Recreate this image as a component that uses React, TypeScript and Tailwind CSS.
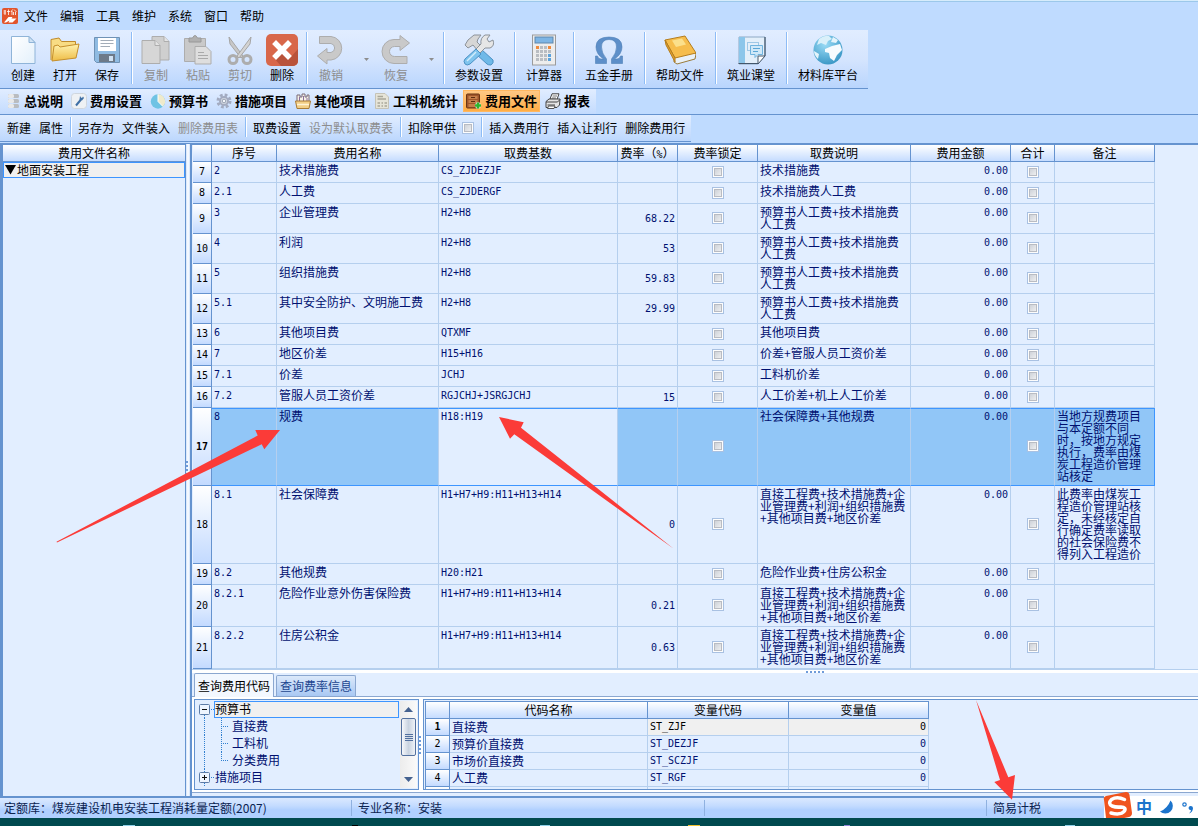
import React from "react";

type IconProps = { className?: string };

/* ---------- toolbar icons ---------- */

const NewIcon = () => (
  <svg viewBox="0 0 32 32" className="size-8">
    <defs>
      <linearGradient id="newG" x1="0" y1="0" x2="1" y2="1">
        <stop offset="0" stopColor="#fff" />
        <stop offset="1" stopColor="#e3f0fb" />
      </linearGradient>
    </defs>
    <path d="M4.500 2.500H22L28 8.500V29.500H4.500Z" fill="url(#newG)" stroke="#8fb4d8" />
    <path d="M22 2.500V8.500H28Z" fill="#cfe2f4" stroke="#8fb4d8" />
  </svg>
);

const OpenIcon = () => (
  <svg viewBox="0 0 32 32" className="size-8">
    <defs>
      <linearGradient id="openG" x1="0" y1="0" x2="0" y2="1">
        <stop offset="0" stopColor="#fff3b0" />
        <stop offset="1" stopColor="#eebc45" />
      </linearGradient>
    </defs>
    <path d="M2 26V5.500L10 4L12.500 7.500H26.500V13" fill="#f8dc84" stroke="#c08a2a" />
    <path d="M5 12L9 11L11 13L30 10L27 24L3 27Z" fill="url(#openG)" stroke="#c58f2c" />
  </svg>
);

const SaveIcon = () => (
  <svg viewBox="0 0 32 32" className="size-8">
    <path d="M3.500 3.500H28.500V28.500H5.500L3.500 26.500Z" fill="#8fbbe2" stroke="#6f92b5" />
    <rect x="7" y="4" width="18" height="13" fill="#fff" />
    <path d="M9.500 6.500H22.500M9.500 9.500H22.500M9.500 12.500H19" stroke="#a3adb8" />
    <rect x="8" y="20" width="16" height="8" fill="#6d7a89" />
    <rect x="18" y="22" width="4" height="5" fill="#cfe2f4" />
  </svg>
);

const CopyIcon = () => (
  <svg viewBox="0 0 32 32" className="size-8">
    <path d="M12 2.500H24L29 7.500V26H12Z" fill="#cfcfcf" stroke="#adadad" />
    <path d="M24 2.500V7.500H29" fill="#e4e4e4" stroke="#adadad" />
    <path d="M2 6.500H15L20 11.500V29.500H2Z" fill="#d6d6d6" stroke="#adadad" />
    <path d="M15 6.500V11.500H20" fill="#e4e4e4" stroke="#adadad" />
  </svg>
);

const PasteIcon = () => (
  <svg viewBox="0 0 32 32" className="size-8">
    <path d="M2.500 4.500H23.500V27.500H2.500Z" fill="#c9c9c9" stroke="#adadad" />
    <path d="M7 8V4H10.500Q13 -1 15.500 4H19V8Z" fill="#b0b0b0" stroke="#989898" />
    <path d="M13 12.500H24L29 17.500V30H13Z" fill="#dedede" stroke="#adadad" />
    <path d="M16 18.500H22M16 21.500H26M16 24.500H26" stroke="#a9a9a9" />
  </svg>
);

const CutIcon = () => (
  <svg viewBox="0 0 32 32" className="size-8" fill="none">
    <path d="M5 3L19 22L17 24L6 10Z" fill="#c8c8c8" stroke="#a6a6a6" />
    <path d="M27 3L13 22L15 24L26 10Z" fill="#d4d4d4" stroke="#a6a6a6" />
    <circle cx="9" cy="25.500" r="4" stroke="#adadad" strokeWidth="3" />
    <circle cx="23" cy="25.500" r="4" stroke="#adadad" strokeWidth="3" />
  </svg>
);

const DeleteIcon = () => (
  <svg viewBox="0 0 32 32" className="size-8">
    <rect width="32" height="32" rx="5" fill="#d8674a" />
    <path d="M8 24L14 18L24 24L32 15V27A5 5 0 0 1 27 32H15Z" fill="#b9523a" />
    <path d="M10 10L22 22M22 10L10 22" stroke="#fff" strokeWidth="5.500" strokeLinecap="square" />
  </svg>
);

const UndoIcon = () => (
  <svg viewBox="0 0 32 32" className="size-8">
    <path
      d="M4.500 2.500H16A11.800 11.800 0 0 1 16 26H12V30L2.500 22L12 14.500V18.500H16A4.600 4.600 0 0 0 16 9.500H4.500Z"
      fill="#c9c9c9"
      stroke="#adadad"
    />
  </svg>
);

const RedoIcon = () => (
  <svg viewBox="0 0 32 32" className="size-8">
    <path
      d="M27 29.500H14A11.800 11.800 0 0 1 14 5.500H20V1.500L29.500 9L20 16.500V12.500H14.500A5 5 0 0 0 14.500 22.500H27Z"
      fill="#c9c9c9"
      stroke="#adadad"
    />
  </svg>
);

const ToolsIcon = () => (
  <svg viewBox="0 0 32 32" className="size-8">
    <path d="M18 15L30 26Q31 29 28 31Q25 31 24 30L13 20Z" fill="#6fb9e8" stroke="#4b91c4" />
    <path d="M5 14L2 11L5 6L11 1H18L15 5L14 8L19 13L15 17L10 11Z" fill="#d6d6d6" stroke="#8c9299" />
    <path d="M22 1L27 1L24 5L26 8L30 6Q32 12 27 14L22 14L16 20L12 16L18 10Q17 4 22 1Z" fill="#e6e6e6" stroke="#8c9299" />
    <path d="M13 15L18 20L7 30Q4 32 2 30Q0 27 2 25Z" fill="#7fc4ee" stroke="#4b91c4" />
    <path d="M4 27L13 18" stroke="#d3edfb" strokeWidth="1.500" />
  </svg>
);

const CalcIcon = () => (
  <svg viewBox="0 0 32 32" className="size-8">
    <rect x="4.500" y="1" width="23" height="30" fill="#ededed" stroke="#9b9b9b" />
    <rect x="7" y="3" width="18" height="6" fill="#7db5e5" stroke="#5f87ad" />
    {[12, 16, 20, 24].map((y) =>
      [8, 12, 16, 20].map((x) => (
        <rect
          key={x + "-" + y}
          x={x}
          y={y}
          width="3"
          height="3"
          fill={x === 20 && y > 18 ? "#5aa2dc" : y === 12 && (x === 8 || x === 20) ? "#f08a3c" : "#b9bdc2"}
        />
      ))
    )}
  </svg>
);

const OmegaIcon = () => (
  <svg viewBox="0 0 32 32" className="size-8">
    <path
      d="M2.500 22H4.500Q5 25 8 25H10.500Q3 20 3 13Q3 3 16 3T29 13Q29 20 21.500 25H24Q27 25 27.500 22H29.500V29.500H18.500V25Q23.500 19 23.500 13Q23.500 5.500 16 5.500T8.500 13Q8.500 19 13.500 25V29.500H2.500Z"
      fill="#5d8fc9"
      stroke="#4f7fb6"
      strokeWidth=".6"
    />
  </svg>
);

const BookIcon = () => (
  <svg viewBox="0 0 32 32" className="size-8">
    <path d="M10 23L30 18L32 20L31 25L13 30L10 28Z" fill="#e9f1f8" stroke="#9a7b3a" />
    <path d="M1 6L21 2L32 19L11 24Z" fill="#f6bd4c" stroke="#b47d1e" />
    <path d="M1 6L11 24V28L2 11Z" fill="#e09f2e" stroke="#b47d1e" />
    <path d="M8 6.500L18 4.500L22 10.500L12 13Z" fill="#fbe08c" />
  </svg>
);

const ClassIcon = () => (
  <svg viewBox="0 0 32 32" className="size-8">
    <path d="M4 3H30V22L23 30H4Z" fill="#e3effa" stroke="#8ea9c4" />
    <path d="M4 3H10V30H4Z" fill="#8cc6ea" />
    <path d="M3.500 29.500H23M30 3V22" stroke="#44566a" strokeWidth="1.200" />
    <rect x="12.500" y="8.500" width="11" height="8" fill="none" stroke="#9fc8e6" />
    <path d="M15.500 11.500H27.500V20.500H23L20 23.500V20.500H15.500Z" fill="#cfe8f8" stroke="#6fb3de" />
    <path d="M18 14.500H25M18 17.500H23" stroke="#5ba6d6" />
    <path d="M30 22L23 30V22Z" fill="#fff" stroke="#44566a" />
  </svg>
);

const GlobeIcon = () => (
  <svg viewBox="0 0 32 32" className="size-8">
    <defs>
      <radialGradient id="globeG" cx=".4" cy=".3" r=".8">
        <stop offset="0" stopColor="#9bdcf6" />
        <stop offset="1" stopColor="#2f8fc0" />
      </radialGradient>
    </defs>
    <circle cx="16" cy="16" r="14.500" fill="url(#globeG)" />
    <path d="M7 5Q12 1 17 2L20 5L16 7L14 11L9 9L5 11Z" fill="#d9f0fa" />
    <path d="M13 15L20 12L28 10L30 16L25 21L22 27L18 24L17 19L13 18Z" fill="#f6fbfe" />
    <path d="M2 17L7 20L6 25Q2 21 2 17ZM21 3L26 6L24 9L19 8Z" fill="#e4f4fb" />
  </svg>
);

/* ---------- small icons for the page tabs ---------- */

const DbIcon = ({ className }: IconProps) => (
  <svg viewBox="0 0 16 16" className={className}>
    {[1, 6, 11].map((y) => (
      <g key={y}>
        <rect x="3" y={y} width="11" height="4" rx="1.500" fill="#b9bcc0" />
        <rect x="3" y={y} width="6" height="4" rx="1.500" fill="#e9e9e9" />
      </g>
    ))}
  </svg>
);

const WrenchIcon = ({ className }: IconProps) => (
  <svg viewBox="0 0 16 16" className={className}>
    <rect x=".5" y=".5" width="15" height="15" rx="3" fill="#eef1f4" stroke="#cfd6de" />
    <path d="M5 12.500L10 6.500" stroke="#3f6fa5" strokeWidth="2" />
    <path d="M9 3L8.500 6.500L11 7.500L13 5L12 3.500L11 5L10 4.500Z" fill="#3f6fa5" />
  </svg>
);

const PieIcon = ({ className }: IconProps) => (
  <svg viewBox="0 0 16 16" className={className}>
    <circle cx="8" cy="8.500" r="7.200" fill="#6fc3e4" />
    <path d="M8 1.300A7.200 7.200 0 0 1 13 13.600L8 8.500Z" fill="#efeacb" />
    <path d="M8 1.300V8.500L13 13.600" stroke="#fff" fill="none" />
  </svg>
);

const GearIcon = ({ className }: IconProps) => (
  <svg viewBox="0 0 16 16" className={className}>
    <circle cx="8" cy="8" r="6" fill="none" stroke="#a3abc0" strokeWidth="3" strokeDasharray="2.700 2" />
    <circle cx="8" cy="8" r="4" fill="#d8dce4" stroke="#a3abc0" strokeWidth="2" />
    <circle cx="8" cy="8" r="1.800" fill="#f4f6fa" stroke="#98a2b3" />
  </svg>
);

const BasketIcon = ({ className }: IconProps) => (
  <svg viewBox="0 0 16 16" className={className}>
    <path d="M2 8V2H5V4H7V1H10V4H12V2H14V8" fill="#f5f1e8" stroke="#7b6a78" />
    <path d="M4.500 4V8M8.500 3V8M12 5V8" stroke="#8d6f9c" />
    <path d="M.5 8H15.500L14 15.500H2Z" fill="#f3cf86" stroke="#a97b36" />
    <path d="M2 11.500H14" stroke="#fff3d5" strokeWidth="1.500" />
  </svg>
);

const ReportIcon = ({ className }: IconProps) => (
  <svg viewBox="0 0 16 16" className={className}>
    <path d="M1.500 .5H11L14.500 4V15.500H1.500Z" fill="#e6e4d8" stroke="#c5c3b7" />
    <path d="M3.500 3.500H9M3.500 6H12M3.500 10H6M7.500 10H9M10.500 10H13M3.500 13H6M7.500 13H9M10.500 13H13" stroke="#a9a799" strokeWidth="1.500" />
  </svg>
);

const CabinetIcon = ({ className }: IconProps) => (
  <svg viewBox="0 0 16 16" className={className}>
    <rect x=".5" y="1" width="13" height="14" rx="1" fill="#a0562a" stroke="#6a3414" />
    <rect x="2.500" y="3" width="9" height="3" fill="#c67f4a" />
    <rect x="2.500" y="7" width="9" height="3" fill="#c67f4a" />
    <rect x="2.500" y="11" width="9" height="3" fill="#c67f4a" />
    <path d="M5 4.500H9M5 8.500H9" stroke="#5e2c10" />
    <path d="M12 9.500V15.500M9 12.500H15" stroke="#fff" strokeWidth="3.500" />
    <path d="M12 9.500V15.500M9 12.500H15" stroke="#2db52d" strokeWidth="2.500" />
  </svg>
);

const PrinterIcon = ({ className }: IconProps) => (
  <svg viewBox="0 0 16 16" className={className}>
    <path d="M5 6L7 .8H14L12 6.500Z" fill="#fff" stroke="#444" />
    <path d="M7.500 3H12M7 5H11" stroke="#777" />
    <path d="M1 8.500L4 6H15L14.500 12L12 14.500H1Z" fill="#e4e4e4" stroke="#444" />
    <path d="M1 9H12.500L15 6.500M2.500 12H10" stroke="#444" fill="none" />
    <path d="M3.500 13H10L9 15.500H2.500Z" fill="#fff" stroke="#555" />
  </svg>
);

/* ---------- building blocks ---------- */

const Sep = () => (
  <span className="mt-0.5 mb-1 ml-[3px] mr-0.5 w-0.5 shrink-0 self-stretch border-l border-[#8dbcf6] bg-white" />
);

const Check = ({ label }: { label: string }) => (
  <input
    type="checkbox"
    aria-label={label}
    className="mx-auto block size-3 appearance-none border border-[#a9c1e2] bg-linear-to-br from-[#c4c9d1] to-[#f8f8f8] shadow-[inset_0_0_0_1px_#fdfdfd,inset_0_0_0_2px_#b9bcc3] checked:bg-[#5b87c5]"
  />
);

const BigButton = ({
  label,
  icon,
  wide = "w-[42px]",
  off = false,
}: {
  label: string;
  icon: React.ReactNode;
  wide?: string;
  off?: boolean;
}) => (
  <button
    type="button"
    disabled={off}
    className={`flex ${wide} shrink-0 flex-col items-center gap-px pt-1 text-xs leading-4 whitespace-nowrap ${
      off ? "text-[#8d8d8d]" : "text-black"
    }`}
  >
    {icon}
    {label}
  </button>
);

const DropArrow = ({ label }: { label: string }) => (
  <button type="button" disabled aria-label={label} className="flex w-[23px] shrink-0 items-center justify-end pr-[6px]">
    <svg viewBox="0 0 5 3" className="h-[3px] w-[5px]">
      <path d="M0 0H5L2.500 3Z" fill="#8d8d8d" />
    </svg>
  </button>
);

const TextButton = ({ label, off = false }: { label: string; off?: boolean }) => (
  <button
    type="button"
    disabled={off}
    className={`shrink-0 px-1 text-xs whitespace-nowrap ${off ? "text-[#8d8d8d]" : "text-black"}`}
  >
    {label}
  </button>
);

type FeeRow = {
  n: number;
  no: string;
  name: string;
  base: string;
  rate?: string;
  desc: string;
  note?: string;
};

const workDesc = "直接工程费+技术措施费+企业管理费+利润+组织措施费+其他项目费+地区价差";
const laborDesc = "预算书人工费+技术措施费人工费";

const feeRows: FeeRow[] = [
  { n: 7, no: "2", name: "技术措施费", base: "CS_ZJDEZJF", desc: "技术措施费" },
  { n: 8, no: "2.1", name: "人工费", base: "CS_ZJDERGF", desc: "技术措施费人工费" },
  { n: 9, no: "3", name: "企业管理费", base: "H2+H8", rate: "68.22", desc: laborDesc },
  { n: 10, no: "4", name: "利润", base: "H2+H8", rate: "53", desc: laborDesc },
  { n: 11, no: "5", name: "组织措施费", base: "H2+H8", rate: "59.83", desc: laborDesc },
  { n: 12, no: "5.1", name: "其中安全防护、文明施工费", base: "H2+H8", rate: "29.99", desc: laborDesc },
  { n: 13, no: "6", name: "其他项目费", base: "QTXMF", desc: "其他项目费" },
  { n: 14, no: "7", name: "地区价差", base: "H15+H16", desc: "价差+管服人员工资价差" },
  { n: 15, no: "7.1", name: "价差", base: "JCHJ", desc: "工料机价差" },
  { n: 16, no: "7.2", name: "管服人员工资价差", base: "RGJCHJ+JSRGJCHJ", rate: "15", desc: "人工价差+机上人工价差" },
  {
    n: 17,
    no: "8",
    name: "规费",
    base: "H18:H19",
    desc: "社会保障费+其他规费",
    note: "当地方规费项目与本定额不同时，按地方规定执行，费率由煤炭工程造价管理站核定",
  },
  {
    n: 18,
    no: "8.1",
    name: "社会保障费",
    base: "H1+H7+H9:H11+H13+H14",
    rate: "0",
    desc: workDesc,
    note: "此费率由煤炭工程造价管理站核定，未经核定自行确定费率读取的社会保险费不得列入工程造价",
  },
  { n: 19, no: "8.2", name: "其他规费", base: "H20:H21", desc: "危险作业费+住房公积金" },
  { n: 20, no: "8.2.1", name: "危险作业意外伤害保险费", base: "H1+H7+H9:H11+H13+H14", rate: "0.21", desc: workDesc },
  { n: 21, no: "8.2.2", name: "住房公积金", base: "H1+H7+H9:H11+H13+H14", rate: "0.63", desc: workDesc },
];

const headCell =
  "h-[17px] border-r border-b border-[#6593cf] bg-linear-to-b from-white to-[#c5dcff] p-0 text-center align-middle text-xs leading-4 font-normal text-black";
const rowHead =
  "border-r border-b border-[#6593cf] bg-linear-to-b from-white to-[#c3daff] p-0 text-center align-middle font-['DejaVu_Sans_Mono',monospace] text-[10px] leading-3 text-black";
const mono = "font-['DejaVu_Sans_Mono',monospace] text-[10px]";

const feeHeads: React.ReactNode[] = [
  "",
  "序号",
  "费用名称",
  "取费基数",
  <>
    费率（<span className={`${mono} leading-none`}>%</span>）
  </>,
  "费率锁定",
  "取费说明",
  "费用金额",
  "合计",
  "备注",
];

function FeeTable() {
  return (
    <table className="table-fixed border-separate border-spacing-0 text-xs leading-3 text-[#001070]">
      <colgroup>
        <col className="w-[19px]" />
        <col className="w-[65px]" />
        <col className="w-[162px]" />
        <col className="w-[179px]" />
        <col className="w-[60px]" />
        <col className="w-[80px]" />
        <col className="w-[153px]" />
        <col className="w-[100px]" />
        <col className="w-[44px]" />
        <col className="w-[100px]" />
      </colgroup>
      <thead>
        <tr>
          {feeHeads.map((h, i) => (
            <th key={i} scope="col" className={`${headCell} whitespace-nowrap`}>
              {h}
            </th>
          ))}
        </tr>
      </thead>
      <tbody>
        {feeRows.map((r) => {
          const sel = r.n === 17;
          const base = `h-[21px] border-r border-b px-0.5 ${
            sel ? "border-t border-r-[#b5cfee] border-y-[#3d95ff] bg-[#91c6f7]" : "border-[#b5cfee]"
          }`;
          const cell = `${base} ${sel ? "pt-px pb-[3px]" : "pt-0.5 pb-[3px]"}`;
          const code = `${base} ${mono} ${sel ? "py-0.5" : "pt-[3px] pb-0.5"}`;
          return (
            <tr key={r.n}>
              <th scope="row" className={`${rowHead} ${sel ? "font-bold" : "font-normal"}`}>
                {r.n}
              </th>
              <td className={`${code} align-top`}>{r.no}</td>
              <td className={`${cell} align-top`}>{r.name}</td>
              <td className={`${code} align-top ${sel ? "bg-[#e2eeff]!" : ""}`}>{r.base}</td>
              <td className={`${code} text-right align-middle`}>{r.rate}</td>
              <td className={`${cell} align-middle`}>
                <Check label={`费率锁定 ${r.n}`} />
              </td>
              <td className={`${cell} align-top`}>{r.desc}</td>
              <td className={`${code} text-right align-top`}>0.00</td>
              <td className={`${cell} align-middle`}>
                <Check label={`合计 ${r.n}`} />
              </td>
              <td className={`${cell} align-top ${sel ? "border-r-[#3d95ff]!" : ""}`}>
                <div className="w-[88px]">{r.note}</div>
              </td>
            </tr>
          );
        })}
      </tbody>
    </table>
  );
}

const codeRows = [
  ["直接费", "ST_ZJF"],
  ["预算价直接费", "ST_DEZJF"],
  ["市场价直接费", "ST_SCZJF"],
  ["人工费", "ST_RGF"],
  ["", ""],
];

function CodeTable() {
  return (
    <table className="table-fixed border-separate border-spacing-0 text-xs leading-4 text-[#001070]">
      <colgroup>
        <col className="w-6" />
        <col className="w-[198px]" />
        <col className="w-[141px]" />
        <col className="w-[140px]" />
      </colgroup>
      <thead>
        <tr>
          {["", "代码名称", "变量代码", "变量值"].map((h, i) => (
            <th key={i} scope="col" className={headCell}>
              {h}
            </th>
          ))}
        </tr>
      </thead>
      <tbody>
        {codeRows.map(([name, code], i) => {
          const cell = "h-[17px] border-r border-b border-[#b5cfee] px-0.5 py-0 align-middle";
          const first = i === 0 ? "bg-[#f0f0f0] text-black" : "";
          return (
            <tr key={i}>
              <th scope="row" className={`${rowHead} ${i === 0 ? "font-bold" : "font-normal"}`}>
                {name ? i + 1 : ""}
              </th>
              <td className={cell}>{name}</td>
              <td className={`${cell} ${mono} ${first}`}>{code}</td>
              <td className={`${cell} ${mono} text-right ${first}`}>{name ? "0" : ""}</td>
            </tr>
          );
        })}
      </tbody>
    </table>
  );
}

const ExpandBox = ({ open }: { open: boolean }) => (
  <svg viewBox="0 0 15 17" className="h-[17px] w-[15px] shrink-0">
    <path d="M10 8.500H15" stroke="#2f7fd0" strokeDasharray="1 1" />
    {open ? (
      <path d="M5.500 14V17" stroke="#2f7fd0" strokeDasharray="1 1" />
    ) : (
      <path d="M5.500 0V3M5.500 14V17" stroke="#2f7fd0" strokeDasharray="1 1" />
    )}
    <rect x=".5" y="3.500" width="10" height="10" rx="1" fill="#eef5ff" stroke="#5c7ba6" />
    <path d={open ? "M3 8.500H8" : "M3 8.500H8M5.500 6V11"} stroke="#111" />
  </svg>
);

const Branch = ({ last }: { last: boolean }) => (
  <svg viewBox="0 0 32 17" className="h-[17px] w-8 shrink-0">
    <path d="M5.500 0V17" stroke="#2f7fd0" strokeDasharray="1 1" />
    <path d={last ? "M22.500 0V8" : "M22.500 0V17"} stroke="#2f7fd0" strokeDasharray="1 1" />
    <path d="M22 8.500H30" stroke="#2f7fd0" strokeDasharray="1 1" />
  </svg>
);

function CodeTree() {
  return (
    <div className="flex w-[225px] shrink-0 overflow-hidden border border-[#6593cf] p-px">
      <ul className="flex-1 pl-[3px] text-xs leading-4 text-[#001070]">
        <li className="flex h-[17px]">
          <ExpandBox open />
          <span className="flex-1 border border-[#3d95ff] bg-[#f0f0f0] leading-[14px] text-black">预算书</span>
        </li>
        {["直接费", "工料机", "分类费用"].map((t, i) => (
          <li key={t} className="flex h-[17px]">
            <Branch last={i === 2} />
            <span className="pl-px">{t}</span>
          </li>
        ))}
        <li className="flex h-[17px]">
          <ExpandBox open={false} />
          <span className="pl-px">措施项目</span>
        </li>
      </ul>
      <div className="ml-px flex w-[17px] flex-col items-center bg-linear-to-r from-[#ececec] to-[#fafafa]">
        <button type="button" aria-label="向上滚动" className="flex h-[17px] w-full shrink-0 items-center justify-center">
          <svg viewBox="0 0 9 5" className="h-[5px] w-[9px]">
            <path d="M0 5L4.500 0L9 5Z" fill="#44618f" />
          </svg>
        </button>
        <div className="flex h-[38px] w-[15px] shrink-0 flex-col items-center justify-center gap-px rounded-xs border border-[#52709f] bg-linear-to-r from-[#f6f8fb] via-[#c9d3e0] to-[#eef2f7]">
          <i className="h-px w-2 bg-[#52709f]" />
          <i className="h-px w-2 bg-[#52709f]" />
          <i className="h-px w-2 bg-[#52709f]" />
          <i className="h-px w-2 bg-[#52709f]" />
        </div>
        <div className="flex-1" />
        <button type="button" aria-label="向下滚动" className="flex h-[17px] w-full shrink-0 items-center justify-center">
          <svg viewBox="0 0 9 5" className="h-[5px] w-[9px]">
            <path d="M0 0L4.500 5L9 0Z" fill="#44618f" />
          </svg>
        </button>
      </div>
    </div>
  );
}

const Grip = ({ vertical = false }: { vertical?: boolean }) => (
  <span className={`flex gap-0.5 ${vertical ? "flex-col" : ""}`}>
    {[0, 1, 2, 3, 4].map((k) => (
      <i key={k} className="size-0.5 bg-[#6f9bd8]" />
    ))}
  </span>
);

const pageTabs = [
  { label: "总说明", Icon: DbIcon },
  { label: "费用设置", Icon: WrenchIcon },
  { label: "预算书", Icon: PieIcon },
  { label: "措施项目", Icon: GearIcon },
  { label: "其他项目", Icon: BasketIcon },
  { label: "工料机统计", Icon: ReportIcon },
  { label: "费用文件", Icon: CabinetIcon },
  { label: "报表", Icon: PrinterIcon },
];

export default function App() {
  return (
    <div className="relative flex h-screen flex-col overflow-hidden bg-[#bfdbff] font-['Noto_Sans_CJK_SC',sans-serif] text-xs text-black">
      {/* menu */}
      <nav className="flex h-[30px] shrink-0 items-center border-t border-[#d6ecfb] pl-0.5 shadow-[inset_0_1px_0_#9cc8ea]">
        <svg viewBox="0 0 16 16" className="size-4">
          <rect width="16" height="16" rx="2" fill="#e2542b" />
          <path d="M1.500 3H4M3 2V7M1.500 5H4M5 3.500H8M6.500 1.500V7M10.500 1.500L9 4M10 3V7M12 1.500L14.500 4M11.500 4V7M13.500 4V7" stroke="#fff" strokeWidth=".8" />
          <path d="M2 14.500L6.500 9H10.500L9.500 10.500H14.500L10.500 14.500H6.500L7.500 12.500L4 14.500Z" fill="#fff" />
        </svg>
        {["文件", "编辑", "工具", "维护", "系统", "窗口", "帮助"].map((m) => (
          <button key={m} type="button" className="px-1.5">
            {m}
          </button>
        ))}
      </nav>

      {/* main toolbar */}
      <div className="flex h-[59px] shrink-0">
        <div className="flex border-b border-[#6593cf] bg-linear-to-b from-[#e1edff] via-[#d5e5fe] to-[#b9d5fd] px-0.5">
          <BigButton label="创建" icon={<NewIcon />} />
          <BigButton label="打开" icon={<OpenIcon />} />
          <BigButton label="保存" icon={<SaveIcon />} />
          <Sep />
          <BigButton label="复制" icon={<CopyIcon />} off />
          <BigButton label="粘贴" icon={<PasteIcon />} off />
          <BigButton label="剪切" icon={<CutIcon />} off />
          <BigButton label="删除" icon={<DeleteIcon />} />
          <Sep />
          <BigButton label="撤销" icon={<UndoIcon />} off />
          <DropArrow label="撤销列表" />
          <BigButton label="恢复" icon={<RedoIcon />} off />
          <DropArrow label="恢复列表" />
          <Sep />
          <BigButton label="参数设置" icon={<ToolsIcon />} wide="w-16" />
          <Sep />
          <BigButton label="计算器" icon={<CalcIcon />} wide="w-[52px]" />
          <Sep />
          <BigButton label="五金手册" icon={<OmegaIcon />} wide="w-16" />
          <Sep />
          <BigButton label="帮助文件" icon={<BookIcon />} wide="w-16" />
          <Sep />
          <BigButton label="筑业课堂" icon={<ClassIcon />} wide="w-16" />
          <Sep />
          <BigButton label="材料库平台" icon={<GlobeIcon />} wide="w-[76px]" />
        </div>
      </div>

      {/* page tabs */}
      <div className="flex h-[26px] shrink-0 border-b border-[#6593cf]">
        <div className="flex items-center gap-0.5 bg-linear-to-b from-[#e1edff] to-[#c3dbfe] pr-[3px] pb-0.5 pl-0.5">
          {pageTabs.map(({ label, Icon }) => (
            <button
              key={label}
              type="button"
              className={`flex h-[22px] shrink-0 items-center gap-[3px] px-[3px] text-[13px] font-bold whitespace-nowrap ${
                label === "费用文件" ? "bg-linear-to-b from-[#ffc987] to-[#ffab3f] outline outline-[#ffb760] -outline-offset-1" : ""
              }`}
            >
              <Icon className="size-4" />
              {label}
            </button>
          ))}
        </div>
      </div>

      {/* page toolbar */}
      <div className="flex h-[29px] shrink-0 border-b border-[#6593cf] pb-px">
        <div className="flex items-center border-b border-[#6593cf] bg-linear-to-b from-[#e1edff] to-[#bcd7fd] pr-0.5 pl-[3px]">
          <TextButton label="新建" />
          <TextButton label="属性" />
          <Sep />
          <TextButton label="另存为" />
          <TextButton label="文件装入" />
          <TextButton label="删除费用表" off />
          <Sep />
          <TextButton label="取费设置" />
          <TextButton label="设为默认取费表" off />
          <Sep />
          <label className="flex items-center gap-1.5 px-1 whitespace-nowrap">
            扣除甲供
            <Check label="扣除甲供" />
          </label>
          <Sep />
          <TextButton label="插入费用行" />
          <TextButton label="插入让利行" />
          <TextButton label="删除费用行" />
        </div>
      </div>

      {/* work area */}
      <div className="flex min-h-0 flex-1 border-l-2 border-[#6593cf]">
        <aside className="w-[184px] shrink-0 border-x border-[#6593cf] bg-[#e2eeff]">
          <h2 className="border-y border-[#6593cf] bg-linear-to-b from-white to-[#c5dcff] text-center text-xs leading-4 font-normal">
            费用文件名称
          </h2>
          <div className="flex items-center border border-[#3d95ff] bg-[#f0f0f0] pl-px leading-[14px]">
            <svg viewBox="0 0 12 10" className="h-2.5 w-3">
              <path d="M0 0H11L5.500 9.500Z" fill="#000" />
            </svg>
            地面安装工程
          </div>
        </aside>
        <div className="flex w-1 shrink-0 items-center bg-linear-to-r from-[#cfe1fb] via-white to-[#cfe1fb]">
          <Grip vertical />
        </div>

        <main className="flex min-w-0 flex-1 flex-col border-l-2 border-[#6593cf] bg-[#e2eeff]">
          <div className="min-h-0 flex-1 overflow-hidden border-t border-[#6593cf] pl-px">
            <FeeTable />
          </div>
          <div className="flex h-1 shrink-0 items-center justify-center border-t border-[#b5cfee] bg-white pl-[240px]">
            <Grip />
          </div>

          <div className="flex h-6 shrink-0 items-end border-b border-[#8ba7d0] pl-0.5" role="tablist">
            <button
              type="button"
              role="tab"
              aria-selected="true"
              className="-mb-px h-6 rounded-t-xs border border-b-0 border-[#8ba7d0] bg-[#f3f8ff] px-[3px]"
            >
              查询费用代码
            </button>
            <button
              type="button"
              role="tab"
              aria-selected="false"
              className="ml-0.5 h-[21px] rounded-t-xs border border-b-0 border-[#8ba7d0] bg-linear-to-b from-[#dce9fa] to-[#a9c8f3] px-[3px] text-[#1d4690]"
            >
              查询费率信息
            </button>
          </div>

          <div className="mb-[3px] flex shrink-0 border-b border-[#8ba7d0] bg-white py-0.5 pl-0.5">
            <div className="flex h-[91px] min-w-0 flex-1 bg-[#e2eeff]">
              <CodeTree />
              <div className="flex w-1 shrink-0 items-center bg-white">
                <Grip vertical />
              </div>
              <div className="min-w-0 flex-1 overflow-hidden border border-r-0 border-[#6593cf] pt-px pl-px">
                <div className="flex">
                  <div className="border-t border-l border-[#6593cf]">
                    <CodeTable />
                  </div>
                </div>
              </div>
            </div>
          </div>
        </main>
      </div>

      {/* status bar */}
      <footer className="flex h-[22px] shrink-0 items-center border-t-2 border-[#6593cf] bg-linear-to-b from-[#dbe9ff] from-0% via-[#c3dbff] via-40% to-[#b0d0ff] to-60% text-xs text-[#0b2350]">
        <span className="w-[351px] shrink-0 pl-1 whitespace-nowrap">定额库：煤炭建设机电安装工程消耗量定额(2007)</span>
        <span className="h-4 w-[353px] shrink-0 border-l border-[#8fb1e0] pl-1.5 leading-4 whitespace-nowrap">专业名称：安装</span>
        <span className="h-4 min-w-0 flex-1 border-l border-[#8fb1e0]" />
        <span className="h-4 w-[118px] shrink-0 border-l border-[#8fb1e0] pl-1.5 leading-4 whitespace-nowrap">简易计税</span>
        <div className="-mt-0.5 flex h-[22px] w-[94px] shrink-0 items-center bg-white">
          <svg viewBox="0 0 94 22" className="h-[22px] w-[94px] overflow-visible">
            <path d="M0 4Q-1 1 2 0L22 -4Q25 -4 25.500 -1L28 17Q28 20 25 21L6 25Q3 25 2 22Z" fill="#f0541e" />
            <path
              d="M20.500 3.500Q13 0 7.500 3.500Q3.500 7.500 8 10Q12 11.500 17 11Q22.500 11.500 20.500 15Q17 19.500 7 17"
              fill="none"
              stroke="#fff"
              strokeWidth="3.500"
              strokeLinecap="round"
            />
            <text x="32" y="17" fontSize="16" fontWeight="bold" fill="#1c74cc">
              中
            </text>
            <path d="M66.500 4.500A7.300 7.300 0 1 1 56 15.500Q63.500 12.500 66.500 4.500Z" fill="#1c74cc" />
            <circle cx="80.500" cy="8.500" r="1.700" fill="none" stroke="#1c74cc" strokeWidth="1.200" />
            <path d="M84.500 12A2.200 2.200 0 1 1 89 12.500Q88.500 16.500 85 17.500Q87 15.500 87 14.200Q84.500 14 84.500 12Z" fill="#1c74cc" />
          </svg>
        </div>
      </footer>
      <div className="flex h-2 shrink-0 items-end bg-[#004a4f]">
        <svg viewBox="0 0 1198 1" preserveAspectRatio="none" className="h-px w-full">
          <path d="M123 .5H135M540 .5H550M1065 .5H1075" stroke="#8fd0e8" />
          <path d="M688 .5H700" stroke="#f2c12e" />
          <path d="M844 .5H850" stroke="#8d84d8" />
          <path d="M352 .5H358" stroke="#000" />
        </svg>
      </div>

      {/* annotation arrows */}
      <svg viewBox="0 0 1198 826" className="pointer-events-none absolute top-0 left-0 h-[826px] w-[1198px]" fill="#fb3b38">
        <path d="M56.500 541.800L257.700 435.500L255.300 430L280 430L264.300 449.300L261.700 444.300L57 542.600Z" />
        <path d="M499 417L523.700 422.300L521 427.700L673.700 548.800L514.300 434.300L510 438.700Z" />
        <path d="M976 700L1008.300 777.300L1015 775L1012 799.700L994.300 782L1000 780Z" />
      </svg>
    </div>
  );
}
